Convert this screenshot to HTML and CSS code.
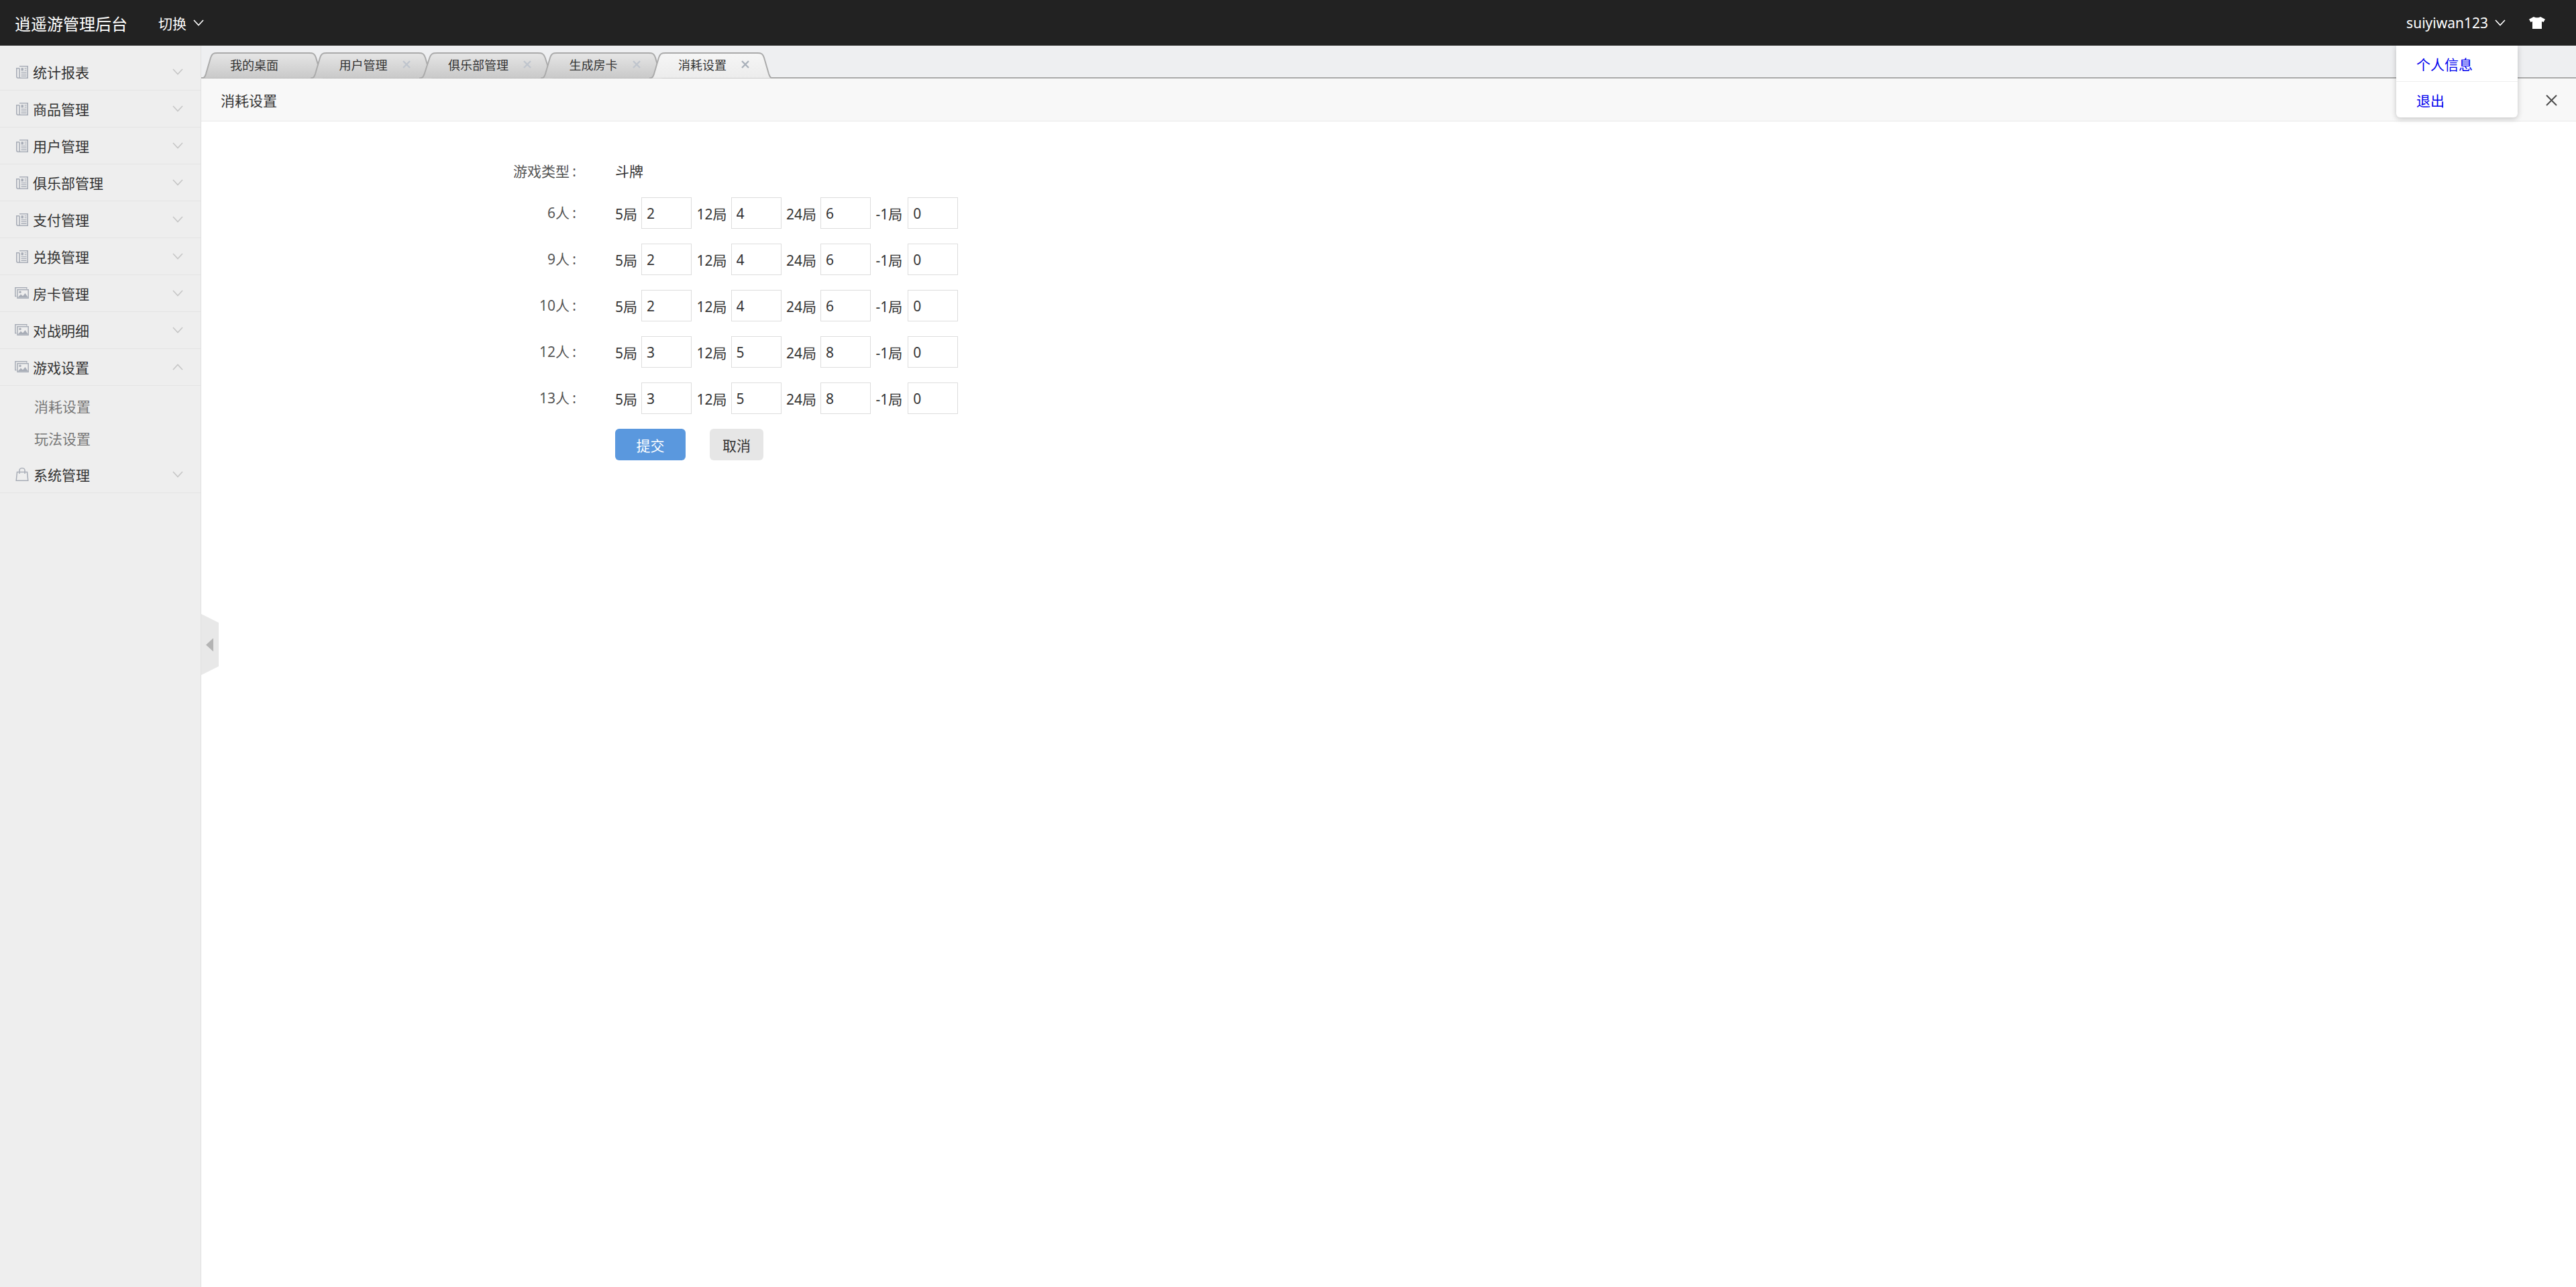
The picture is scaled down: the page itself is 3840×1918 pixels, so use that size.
FILE: index.html
```html
<!DOCTYPE html>
<html lang="zh-CN">
<head>
<meta charset="utf-8">
<title>消耗设置</title>
<link rel="stylesheet" href="styles.css">
</head>
<body>
<svg class="defs" width="0" height="0" aria-hidden="true">
  <defs>
    <linearGradient id="tab-idle" x1="0" y1="0" x2="0" y2="1"><stop offset="0" stop-color="#e6e6e6"/><stop offset="1" stop-color="#c9c9c9"/></linearGradient>
    <linearGradient id="tab-on" x1="0" y1="0" x2="0" y2="1"><stop offset="0" stop-color="#f6f6f6"/><stop offset="1" stop-color="#ececec"/></linearGradient>
    <symbol id="i-news" viewBox="0 0 18 19">
      <path d="M5 .8h12.200v17.400H3A2.200 2.200 0 0 1 .8 16V3.800H5M5 3.800V18" fill="none" stroke="currentColor" stroke-width="1.600"/>
      <path d="M7.500 3.200h3.500v4.200H7.500zM12.500 3.200h3v1.300h-3zM12.500 6h3v1.300h-3zM7.500 9h8v1.300h-8zM7.500 11.800h8v1.300h-8zM7.500 14.600h8v1.300h-8z" fill="currentColor"/>
    </symbol>
    <symbol id="i-pic" viewBox="0 0 21 17">
      <path d="M2.500 13.500H.8V.8h17V2.500" fill="none" stroke="currentColor" stroke-width="1.500"/>
      <path d="M4 3.800h16.200v12.400H4z" fill="none" stroke="currentColor" stroke-width="1.500"/>
      <path d="M4.500 15.500l4.500-5 3 2.800 3.500-4.300 4.500 6.500z" fill="currentColor"/>
      <circle cx="8" cy="7.200" r="1.700" fill="currentColor"/>
    </symbol>
    <symbol id="i-bag" viewBox="0 0 20 20">
      <path d="M2.500 6.500h15l1.300 12.700H1.200zM6 9V4a4 3.400 0 0 1 8 0v5" fill="none" stroke="currentColor" stroke-width="1.500"/>
    </symbol>
    <symbol id="i-down" viewBox="0 0 16 10">
      <path d="M1 1l7 7.500L15 1" fill="none" stroke="currentColor" stroke-width="1.600"/>
    </symbol>
    <symbol id="i-up" viewBox="0 0 16 10">
      <path d="M1 9L8 1.500 15 9" fill="none" stroke="currentColor" stroke-width="1.600"/>
    </symbol>
    <symbol id="i-x" viewBox="0 0 12 12">
      <path d="M1 1l10 10M11 1L1 11" fill="none" stroke="currentColor" stroke-width="2.400"/>
    </symbol>
    <symbol id="i-tab" viewBox="0 0 185 39" preserveAspectRatio="none">
      <path d="M0 38.500C5 38.500 5.500 36 7 32L14 8C16 2 18 1 24 1H161C167 1 169 2 171 8L178 32C179.500 36 180 38.500 185 38.500" vector-effect="non-scaling-stroke"/>
    </symbol>
  </defs>
</svg>

<div class="shell">
  <header class="topbar">
    <span class="brand">逍遥游管理后台</span>
    <span class="switch">切换<svg class="caret"><use href="#i-down"/></svg></span>
    <div class="user">
      <span class="user-name">suiyiwan123<svg class="caret"><use href="#i-down"/></svg></span>
      <svg class="shirt" viewBox="0 0 24 18"><path d="M7 0C9 1.800 15 1.800 17 0L24 3.800 21.500 8 19 7V18H5V7L2.500 8 0 3.800Z" fill="#fff"/></svg>
      <ul class="menu">
        <li><a href="#">个人信息</a></li>
        <li><a href="#">退出</a></li>
      </ul>
    </div>
  </header>

  <div class="body">
    <aside class="sidebar">
      <div class="nav-item"><svg class="ico news"><use href="#i-news"/></svg>统计报表<svg class="chev"><use href="#i-down"/></svg></div>
      <div class="nav-item"><svg class="ico news"><use href="#i-news"/></svg>商品管理<svg class="chev"><use href="#i-down"/></svg></div>
      <div class="nav-item"><svg class="ico news"><use href="#i-news"/></svg>用户管理<svg class="chev"><use href="#i-down"/></svg></div>
      <div class="nav-item"><svg class="ico news"><use href="#i-news"/></svg>俱乐部管理<svg class="chev"><use href="#i-down"/></svg></div>
      <div class="nav-item"><svg class="ico news"><use href="#i-news"/></svg>支付管理<svg class="chev"><use href="#i-down"/></svg></div>
      <div class="nav-item"><svg class="ico news"><use href="#i-news"/></svg>兑换管理<svg class="chev"><use href="#i-down"/></svg></div>
      <div class="nav-item"><svg class="ico pic"><use href="#i-pic"/></svg>房卡管理<svg class="chev"><use href="#i-down"/></svg></div>
      <div class="nav-item"><svg class="ico pic"><use href="#i-pic"/></svg>对战明细<svg class="chev"><use href="#i-down"/></svg></div>
      <div class="nav-item"><svg class="ico pic"><use href="#i-pic"/></svg>游戏设置<svg class="chev"><use href="#i-up"/></svg></div>
      <ul class="subnav">
        <li>消耗设置</li>
        <li>玩法设置</li>
      </ul>
      <div class="nav-item nav-last"><svg class="ico bag"><use href="#i-bag"/></svg>系统管理<svg class="chev"><use href="#i-down"/></svg></div>
    </aside>

    <main class="main">
      <nav class="tabs">
        <div class="tab tab-plain"><svg class="tab-bg"><use href="#i-tab"/></svg><span class="tab-label">我的桌面</span></div>
        <div class="tab"><svg class="tab-bg"><use href="#i-tab"/></svg><span class="tab-label">用户管理<svg class="tab-x"><use href="#i-x"/></svg></span></div>
        <div class="tab"><svg class="tab-bg"><use href="#i-tab"/></svg><span class="tab-label">俱乐部管理<svg class="tab-x"><use href="#i-x"/></svg></span></div>
        <div class="tab"><svg class="tab-bg"><use href="#i-tab"/></svg><span class="tab-label">生成房卡<svg class="tab-x"><use href="#i-x"/></svg></span></div>
        <div class="tab tab-on"><svg class="tab-bg"><use href="#i-tab"/></svg><span class="tab-label">消耗设置<svg class="tab-x"><use href="#i-x"/></svg></span></div>
      </nav>

      <div class="titlebar">
        <span>消耗设置</span>
        <svg class="close" viewBox="0 0 17 17"><path d="M1 1l15 15M16 1L1 16" fill="none" stroke="#4d4d4d" stroke-width="2"/></svg>
      </div>

      <form class="form">
        <div class="row row-type"><label class="row-label">游戏类型 :</label><div class="fields">斗牌</div></div>
        <div class="row"><label class="row-label">6人 :</label><div class="fields">
          <span class="unit">5局</span><input class="num" value="2"><span class="unit">12局</span><input class="num" value="4"><span class="unit">24局</span><input class="num" value="6"><span class="unit unit-neg">-1局</span><input class="num" value="0">
        </div></div>
        <div class="row"><label class="row-label">9人 :</label><div class="fields">
          <span class="unit">5局</span><input class="num" value="2"><span class="unit">12局</span><input class="num" value="4"><span class="unit">24局</span><input class="num" value="6"><span class="unit unit-neg">-1局</span><input class="num" value="0">
        </div></div>
        <div class="row"><label class="row-label">10人 :</label><div class="fields">
          <span class="unit">5局</span><input class="num" value="2"><span class="unit">12局</span><input class="num" value="4"><span class="unit">24局</span><input class="num" value="6"><span class="unit unit-neg">-1局</span><input class="num" value="0">
        </div></div>
        <div class="row"><label class="row-label">12人 :</label><div class="fields">
          <span class="unit">5局</span><input class="num" value="3"><span class="unit">12局</span><input class="num" value="5"><span class="unit">24局</span><input class="num" value="8"><span class="unit unit-neg">-1局</span><input class="num" value="0">
        </div></div>
        <div class="row"><label class="row-label">13人 :</label><div class="fields">
          <span class="unit">5局</span><input class="num" value="3"><span class="unit">12局</span><input class="num" value="5"><span class="unit">24局</span><input class="num" value="8"><span class="unit unit-neg">-1局</span><input class="num" value="0">
        </div></div>
        <div class="row row-actions"><span class="row-label"></span><div class="actions">
          <button type="button" class="btn btn-primary">提交</button>
          <button type="button" class="btn btn-plain">取消</button>
        </div></div>
      </form>
    </main>
  </div>

  <div class="handle"><svg viewBox="0 0 26 91" width="26" height="91"><path d="M0 0L26 13V78L0 91Z" fill="#e8e8e8"/><path d="M18 36V56L7 46Z" fill="#b4b4b4"/></svg></div>
</div>
</body>
</html>
```

FILE: styles.css
```css
* { box-sizing: border-box; }
html, body { margin: 0; height: 100%; }
body {
  font-family: "Noto Sans", "Noto Sans CJK SC", sans-serif;
  font-size: 21px;
  color: #333;
  background: #fff;
}
ul { list-style: none; margin: 0; padding: 0; }
.defs { display: block; height: 0; overflow: hidden; }

.shell { position: relative; height: 100vh; display: flex; flex-direction: column; overflow: hidden; }

/* top bar */
.topbar {
  flex: 0 0 68px;
  display: flex;
  align-items: center;
  background: #222;
  color: #fff;
  padding: 0 46px 0 22px;
}
.brand { font-size: 24px; width: 214px; }
.switch, .user-name { display: inline-flex; align-items: center; }
.caret { width: 16px; height: 10px; margin-left: 10px; color: #fff; }
.user { position: relative; align-self: stretch; margin-left: auto; display: flex; align-items: center; }
.shirt { width: 24px; height: 18px; margin-left: 35px; }
.menu {
  position: absolute;
  z-index: 5;
  top: 100%;
  right: 41px;
  width: 181px;
  height: 107px;
  background: #fff;
  border-radius: 0 0 6px 6px;
  box-shadow: 0 2px 8px rgba(0, 0, 0, .22);
}
.menu li { height: 53px; padding-left: 30px; display: flex; align-items: center; }
.menu li + li { border-top: 1px solid #eee; height: 54px; }
.menu a { color: #00e; text-decoration: none; }

/* layout */
.body { flex: 1; display: flex; min-height: 0; }
.sidebar {
  flex: 0 0 300px;
  background: #eee;
  border-right: 1px solid #e0e0e0;
  padding-top: 12px;
}
.nav-item {
  height: 55px;
  display: flex;
  align-items: center;
  border-bottom: 1px solid #e4e4e4;
  padding: 0 26px 0 24px;
}
.ico { color: #a8adb7; flex: none; }
.ico.news { width: 18px; height: 19px; margin-right: 7px; }
.ico.pic { width: 21px; height: 17px; margin: -2px 6px 0 -2px; }
.ico.bag { width: 20px; height: 20px; margin: -1px 7px 0 -1px; }
.chev { width: 16px; height: 10px; margin: -1px 0 0 auto; color: #c6c6c6; }
.subnav { height: 105px; padding: 7px 0 0 51px; color: #777; }
.subnav li { height: 48px; line-height: 48px; }

.main { flex: 1; min-width: 0; display: flex; flex-direction: column; }

/* tabs */
.tabs {
  flex: 0 0 49px;
  display: flex;
  align-items: flex-end;
  background: #eeeff1;
  border-bottom: 2px solid #aaa;
}
.tab {
  display: grid;
  height: 39px;
  margin: 0 -22.5px -2px 0;
  font-size: 18px;
  position: relative;
}
.tab-bg, .tab-label { grid-area: 1 / 1; }
.tab-bg { width: 0; min-width: 100%; height: 39px; fill: url(#tab-idle); stroke: #aaa; stroke-width: 2; }
.tab-label { position: relative; display: flex; align-items: center; padding: 0 36px 3px 43px; white-space: nowrap; }
.tab-x { width: 12px; height: 12px; margin-left: 22px; color: #bfc5cd; }
.tab-plain .tab-label { padding-right: 70px; }
.tab-on { z-index: 2; }
.tab-on .tab-bg { fill: url(#tab-on); }
.tab-on .tab-x { color: #a9b0ba; }

/* title bar */
.titlebar {
  flex: 0 0 64px;
  display: flex;
  align-items: center;
  justify-content: space-between;
  background: #f8f8f8;
  border-bottom: 1px solid #e8e8e8;
  padding: 0 28px 0 29px;
}
.close { width: 17px; height: 17px; margin-top: 2px; }

/* form */
.form { padding-top: 54px; display: flex; flex-direction: column; gap: 22px; }
.row { display: flex; align-items: center; min-height: 47px; }
.row-type { min-height: 40px; margin-bottom: -3px; }
.row-label { width: 559px; margin-top: -3px; text-align: right; color: #555; white-space: nowrap; word-spacing: -1px; }
.fields, .actions { margin-left: 58px; display: flex; align-items: center; }
.row-type .fields { margin-top: -2px; }
.unit { margin-right: 6px; white-space: nowrap; }
.unit-neg { margin-right: 8px; }
.num {
  width: 75px;
  height: 47px;
  border: 1.5px solid #ddd;
  background: #fff;
  padding: 0 0 0 7px;
  margin-right: 7.5px;
  font: inherit;
  color: #333;
  outline: 0;
}
.btn { height: 47px; border: 0; border-radius: 6px; font: inherit; padding: 0; }
.btn-primary { width: 105px; background: #5a98de; color: #fff; margin-right: 36px; }
.btn-plain { width: 80px; background: #e6e6e6; color: #333; }

.handle { position: absolute; left: 300px; top: calc(50% - 44px); line-height: 0; }
```
